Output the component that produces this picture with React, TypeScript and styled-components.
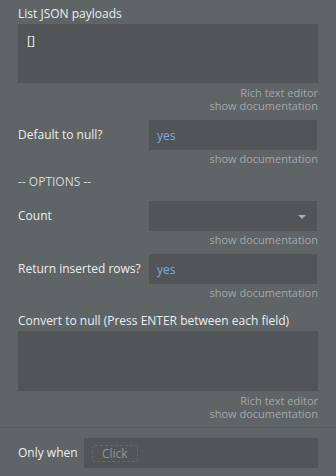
import React from "react";
import styled, { createGlobalStyle } from "styled-components";

const GlobalStyle = createGlobalStyle`
  html, body {
    margin: 0;
    padding: 0;
    background: #5f6467;
  }
  body {
    font-family: "Open Sans", "Liberation Sans", sans-serif;
    font-size: 12px;
    color: #eceeef;
  }
`;

interface Hint {
  editor?: boolean;
}

const Panel = styled.div`
  width: 336px;
  height: 476px;
  background: #5f6467;
  display: flex;
  flex-direction: column;
  box-sizing: border-box;
`;

const Body = styled.div`
  padding: 6px 18px 0 18px;
  display: flex;
  flex-direction: column;
`;

const Label = styled.div`
  line-height: 16px;
  color: #eceeef;
  white-space: nowrap;
`;

const Stacked = styled.div<{ $top?: number }>`
  display: flex;
  flex-direction: column;
  gap: 2px;
  margin-top: ${(p) => p.$top ?? 0}px;
`;

const TextArea = styled.div<{ $height: number }>`
  height: ${(p) => p.$height}px;
  background: #515558;
  box-sizing: border-box;
  padding: 8px 9px;
  line-height: 18px;
  color: #f2f2f2;
`;

const Row = styled.div<{ $top?: number }>`
  display: flex;
  align-items: center;
  margin-top: ${(p) => p.$top ?? 0}px;
`;

const RowLabel = styled(Label)`
  width: 131px;
`;

const Input = styled.div`
  position: relative;
  width: 168px;
  height: 30px;
  background: #515558;
  box-sizing: border-box;
  padding: 0 8px;
  display: flex;
  align-items: center;
  color: #7ea9de;
`;

const Caret = styled.span`
  position: absolute;
  right: 11px;
  top: 14px;
  width: 0;
  height: 0;
  border-left: 4.5px solid transparent;
  border-right: 4.5px solid transparent;
  border-top: 4.5px solid #a9acae;
`;

const Hints = styled.div<{ $top?: number }>`
  display: flex;
  flex-direction: column;
  align-items: flex-end;
  margin-top: ${(p) => p.$top ?? 2}px;
`;

const HintText = styled.span`
  font-size: 11px;
  line-height: 13px;
  color: #a4a7a9;
  white-space: nowrap;
`;

const Heading = styled(Label)<{ $top?: number }>`
  margin-top: ${(p) => p.$top ?? 0}px;
  color: #d6d8d9;
`;

const Footer = styled.div`
  margin-top: 7px;
  border-top: 1px solid #56595c;
  padding: 10px 18px 0 18px;
  display: flex;
  align-items: center;
`;

const FooterLabel = styled(Label)`
  width: 66px;
`;

const ConditionBox = styled.div`
  width: 234px;
  height: 30px;
  background: #515558;
  box-sizing: border-box;
  padding: 0 8px;
  display: flex;
  align-items: center;
`;

const ClickChip = styled.span`
  border: 1px dashed #63676a;
  border-radius: 3px;
  padding: 0 9px;
  height: 17px;
  line-height: 15px;
  box-sizing: border-box;
  color: #8f9396;
  font-size: 12px;
`;

const Docs: React.FC<Hint & { top?: number }> = ({ editor, top }) => (
  <Hints $top={top}>
    {editor && <HintText>Rich text editor</HintText>}
    <HintText>show documentation</HintText>
  </Hints>
);

export default function App() {
  return (
    <>
      <GlobalStyle />
      <Panel>
        <Body>
          <Stacked>
            <Label>List JSON payloads</Label>
            <TextArea $height={59}>[]</TextArea>
          </Stacked>
          <Docs editor top={3} />

          <Row $top={8}>
            <RowLabel>Default to null?</RowLabel>
            <Input>yes</Input>
          </Row>
          <Docs />

          <Heading $top={9}>-- OPTIONS --</Heading>

          <Row $top={11}>
            <RowLabel>Count</RowLabel>
            <Input>
              <Caret />
            </Input>
          </Row>
          <Docs />

          <Row $top={8}>
            <RowLabel>Return inserted rows?</RowLabel>
            <Input>yes</Input>
          </Row>
          <Docs />

          <Stacked $top={14}>
            <Label>Convert to null (Press ENTER between each field)</Label>
            <TextArea $height={60} />
          </Stacked>
          <Docs editor top={3} />
        </Body>

        <Footer>
          <FooterLabel>Only when</FooterLabel>
          <ConditionBox>
            <ClickChip>Click</ClickChip>
          </ConditionBox>
        </Footer>
      </Panel>
    </>
  );
}
